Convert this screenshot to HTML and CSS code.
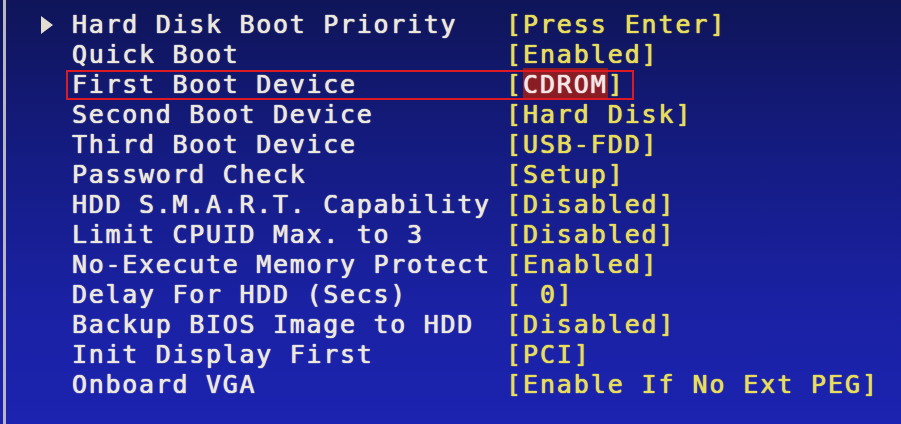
FILE: index.html
```html
<!doctype html>
<html lang="en">
<head>
    <meta charset="UTF-8">
    <title>Advanced BIOS Features</title>
    <link rel="stylesheet" href="styles.css">
</head>
<body>
<div class="screen">
    <div class="menu">
        <div class="row">
            <span class="marker"><span class="arrow"></span></span>
            <div class="pair"><span class="label">Hard Disk Boot Priority</span><span class="value">[Press Enter]</span></div>
        </div>
        <div class="row">
            <span class="marker"></span>
            <div class="pair"><span class="label">Quick Boot</span><span class="value">[Enabled]</span></div>
        </div>
        <div class="row marked">
            <span class="marker"></span>
            <div class="pair"><span class="label">First Boot Device</span><span class="value">[<span class="selected">CDROM</span>]</span></div>
        </div>
        <div class="row">
            <span class="marker"></span>
            <div class="pair"><span class="label">Second Boot Device</span><span class="value">[Hard Disk]</span></div>
        </div>
        <div class="row">
            <span class="marker"></span>
            <div class="pair"><span class="label">Third Boot Device</span><span class="value">[USB-FDD]</span></div>
        </div>
        <div class="row">
            <span class="marker"></span>
            <div class="pair"><span class="label">Password Check</span><span class="value">[Setup]</span></div>
        </div>
        <div class="row">
            <span class="marker"></span>
            <div class="pair"><span class="label">HDD S.M.A.R.T. Capability</span><span class="value">[Disabled]</span></div>
        </div>
        <div class="row">
            <span class="marker"></span>
            <div class="pair"><span class="label">Limit CPUID Max. to 3</span><span class="value">[Disabled]</span></div>
        </div>
        <div class="row">
            <span class="marker"></span>
            <div class="pair"><span class="label">No-Execute Memory Protect</span><span class="value">[Enabled]</span></div>
        </div>
        <div class="row">
            <span class="marker"></span>
            <div class="pair"><span class="label">Delay For HDD (Secs)</span><span class="value">[ 0]</span></div>
        </div>
        <div class="row">
            <span class="marker"></span>
            <div class="pair"><span class="label">Backup BIOS Image to HDD</span><span class="value">[Disabled]</span></div>
        </div>
        <div class="row">
            <span class="marker"></span>
            <div class="pair"><span class="label">Init Display First</span><span class="value">[PCI]</span></div>
        </div>
        <div class="row">
            <span class="marker"></span>
            <div class="pair"><span class="label">Onboard VGA</span><span class="value">[Enable If No Ext PEG]</span></div>
        </div>
    </div>
</div>
</body>
</html>
```

FILE: styles.css
```css
/* Screen */
html, body {
    margin: 0;
    padding: 0;
    height: 100%;
}

body {
    background: linear-gradient(to bottom, #0f1558 0%, #141b80 35%, #1a21a2 70%, #1b23b0 100%);
    overflow: hidden;
    font-family: 'DejaVu Sans Mono', 'Liberation Mono', monospace;
    font-size: 25px;
    letter-spacing: 1.7px;
}

.screen {
    margin-left: 3px;
    height: 100%;
    border-left: 3px solid #b9b6c4;
    box-sizing: border-box;
}

/* Menu rows */
.menu {
    padding-top: 10px;
    padding-left: 35px;
}

.row {
    display: flex;
    height: 30px;
    line-height: 30px;
    white-space: pre;
}

.marker {
    width: 31px;
    flex-shrink: 0;
    display: flex;
    align-items: center;
}

.arrow {
    width: 0;
    height: 0;
    border-top: 9px solid transparent;
    border-bottom: 9px solid transparent;
    border-left: 12px solid #e2ddd0;
}

.pair {
    display: flex;
    position: relative;
}

.label {
    width: 434px;
    color: #ebe8de;
    text-shadow: 0 0 1px #ebe8de, 0 0 1px #ebe8de;
}

.value {
    color: #e6de5c;
    letter-spacing: 1.9px;
    text-shadow: 0 0 1px #e6de5c, 0 0 1px #e6de5c;
}

.selected {
    display: inline-block;
    height: 31px;
    margin-top: -3px;
    line-height: 33px;
    background-color: #8a1d24;
    color: #f2e6e6;
    text-shadow: 0 0 1px #f2e6e6, 0 0 1px #f2e6e6;
}

/* Red frame round the chosen row */
.marked .pair::after {
    content: '';
    position: absolute;
    left: -6px;
    right: -9px;
    top: 0;
    bottom: 0;
    border: 2px solid #dc1a24;
}
```
